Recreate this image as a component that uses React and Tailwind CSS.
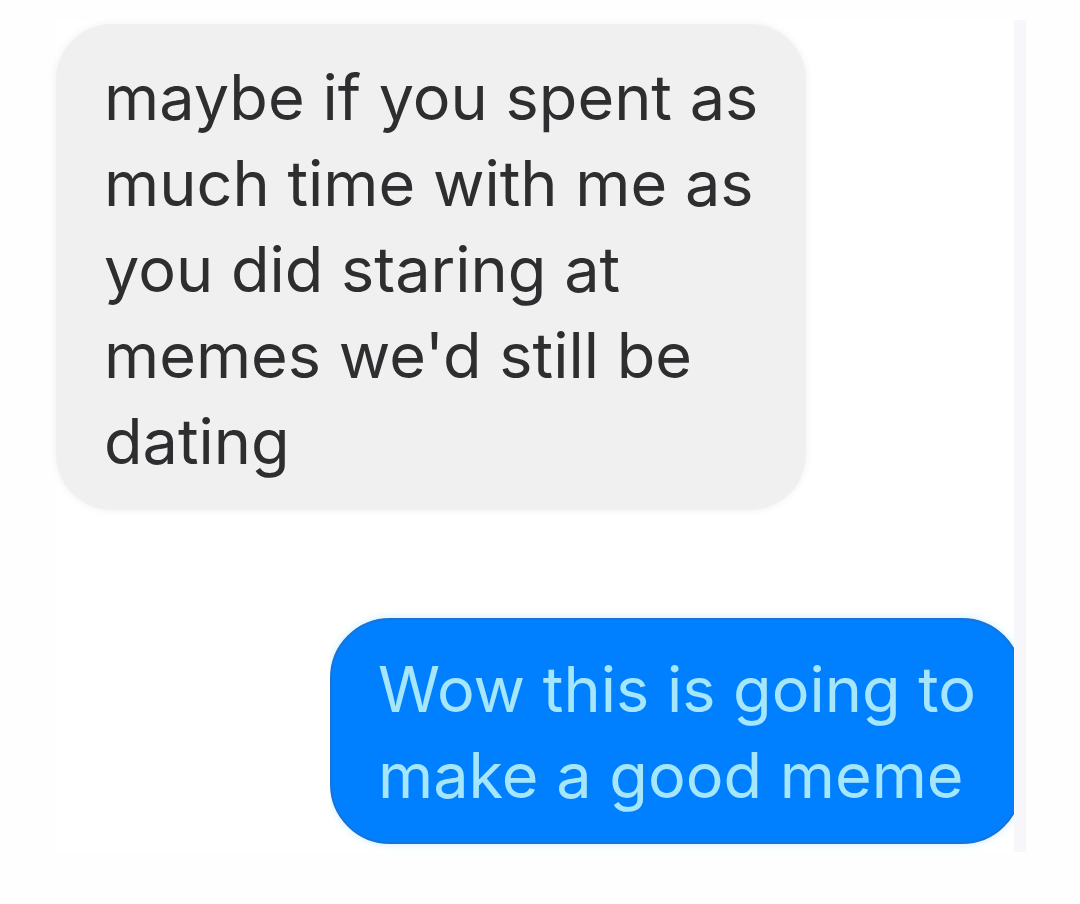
export default function App() {
  return (
    <div className="min-h-screen bg-[#fefefe] pt-5 pb-13 pl-14 pr-[54px] font-['Inter','Liberation_Sans',sans-serif]">
      <main className="flex flex-col border-r-12 border-[#f7f7fb] bg-white pt-1 pb-2">
        <p className="max-w-[750px] self-start rounded-[56px] bg-[#f0f0f0] pt-[30px] pr-8 pb-[26px] pl-12 text-[63px] leading-[86px] text-[#2e2e30] shadow-[0_0_8px_#f0f0f0]">
          maybe if you spent as much time with me as you did staring at memes we'd still be dating
        </p>
        <div className="mt-27 max-w-[684px] self-end overflow-x-clip">
          <p className="-mr-2 rounded-[60px] border-2 border-[#1873d6] bg-[#0080ff] pt-[26px] pr-7 pb-6 pl-[46px] text-[63px] leading-[86px] text-[#a5e6fb] shadow-[0_0_8px_#c8ecff]">
            Wow this is going to make a good meme
          </p>
        </div>
      </main>
    </div>
  );
}
